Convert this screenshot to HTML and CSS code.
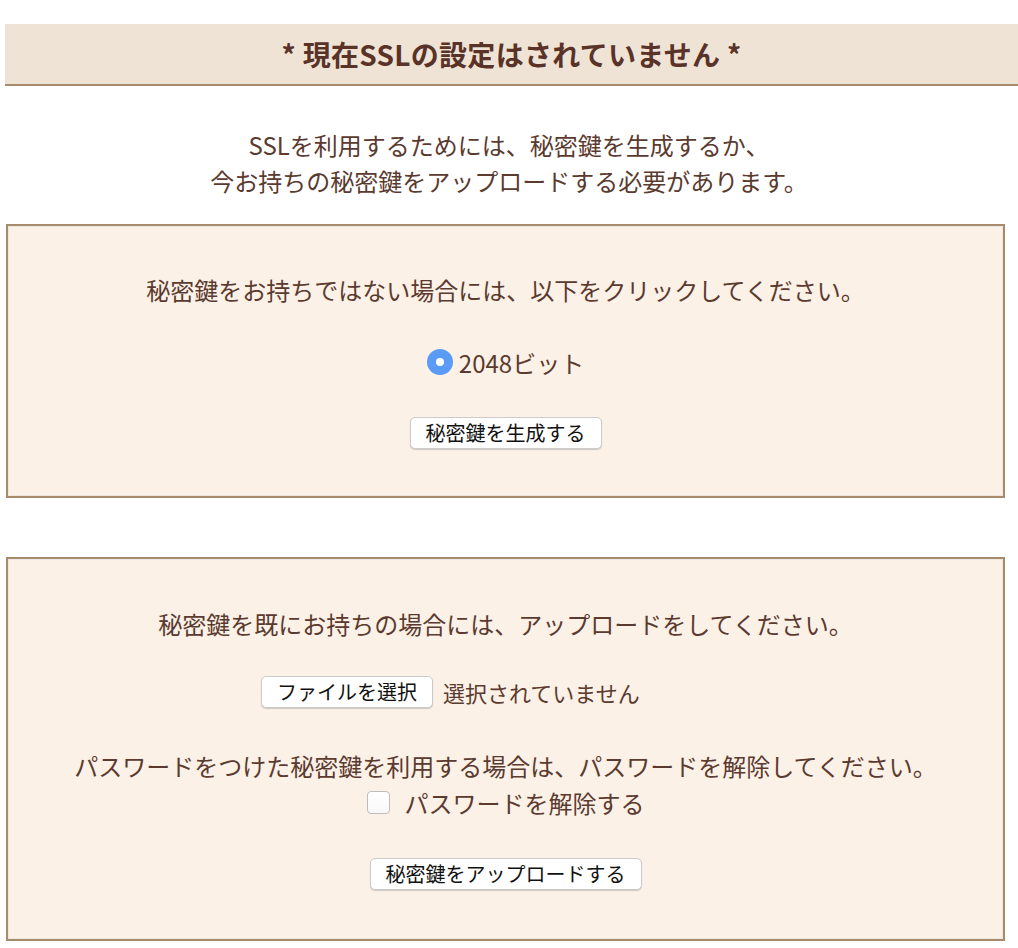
FILE: index.html
```html
<!DOCTYPE html>
<html>
<head>
    <meta charset="UTF-8">
    <title>SSL設定</title>
    <link rel="stylesheet" href="styles.css">
</head>
<body>
    <h2 class="status">* 現在SSLの設定はされていません *</h2>

    <p class="intro">SSLを利用するためには、秘密鍵を生成するか、<br>今お持ちの秘密鍵をアップロードする必要があります。</p>

    <div class="panel panel-generate">
        <p class="line">秘密鍵をお持ちではない場合には、以下をクリックしてください。</p>
        <div class="radio-row">
            <span class="radio"></span>
            <span>2048ビット</span>
        </div>
        <div class="btn-row">
            <button class="btn">秘密鍵を生成する</button>
        </div>
    </div>

    <div class="panel panel-upload">
        <p class="line">秘密鍵を既にお持ちの場合には、アップロードをしてください。</p>
        <div class="file-row">
            <div class="file-input">
                <button class="btn">ファイルを選択</button>
                <span class="file-name">選択されていません</span>
            </div>
        </div>
        <p class="line pass-note">パスワードをつけた秘密鍵を利用する場合は、パスワードを解除してください。</p>
        <div class="check-row">
            <span class="checkbox"></span>
            <span>パスワードを解除する</span>
        </div>
        <div class="btn-row upload-btn">
            <button class="btn">秘密鍵をアップロードする</button>
        </div>
    </div>
</body>
</html>
```

FILE: styles.css
```css
body {
    font-family: "Noto Sans CJK JP", "Noto Sans", sans-serif;
    color: #5b3a2f;
    background-color: #fff;
    margin: 0;
    padding: 0;
    font-size: 24px;
}
.status {
    margin: 24px 0 0 5px;
    height: 60px;
    line-height: 60px;
    background-color: #efe3d6;
    border-bottom: 2px solid #a88a6c;
    text-align: center;
    font-size: 28px;
    font-weight: bold;
    color: #5a3328;
    letter-spacing: 0.3px;
}
.intro {
    margin: 41px 0 25px;
    text-align: center;
    line-height: 36px;
}
.panel {
    margin: 0 13px 0 6px;
    background-color: #fcf1e7;
    border: 2px solid #a88a6c;
    box-shadow: inset 0 0 0 1px #ece7e1;
    text-align: center;
}
.panel-generate {
    padding: 46px 0 47px;
}
.panel-upload {
    margin-top: 59px;
    padding: 47px 0 49px;
}
.line {
    margin: 0;
    line-height: 36px;
}
.radio-row, .check-row {
    display: flex;
    justify-content: center;
    align-items: center;
    height: 36px;
}
.radio-row {
    margin-top: 36px;
    gap: 6px;
}
.radio {
    width: 26px;
    height: 26px;
    border-radius: 50%;
    background-color: #5a9bf5;
    display: flex;
    align-items: center;
    justify-content: center;
}
.radio::after {
    content: "";
    width: 8px;
    height: 8px;
    border-radius: 50%;
    background: #fff;
}
.check-row {
    gap: 15px;
}
.checkbox {
    width: 21px;
    height: 21px;
    border: 1px solid #bdbdbd;
    border-radius: 4px;
    background: linear-gradient(#fff, #f8f8f8);
}
.btn-row {
    margin-top: 37px;
    display: flex;
    justify-content: center;
}
.upload-btn {
    margin-top: 38px;
}
.btn {
    font-family: "Noto Sans CJK JP", sans-serif;
    font-size: 20px;
    color: #111;
    height: 32px;
    line-height: 30px;
    padding: 0 15px;
    background-color: #fff;
    border: 1px solid #cbcbcb;
    border-radius: 5px;
    box-shadow: 0 1px 1px rgba(0, 0, 0, 0.18);
}
.file-row {
    margin-top: 34px;
    display: flex;
    justify-content: center;
}
.file-input {
    width: 489px;
    display: flex;
    align-items: center;
    gap: 10px;
}
.file-name {
    font-size: 22px;
}
.pass-note {
    margin-top: 40px;
}
```
